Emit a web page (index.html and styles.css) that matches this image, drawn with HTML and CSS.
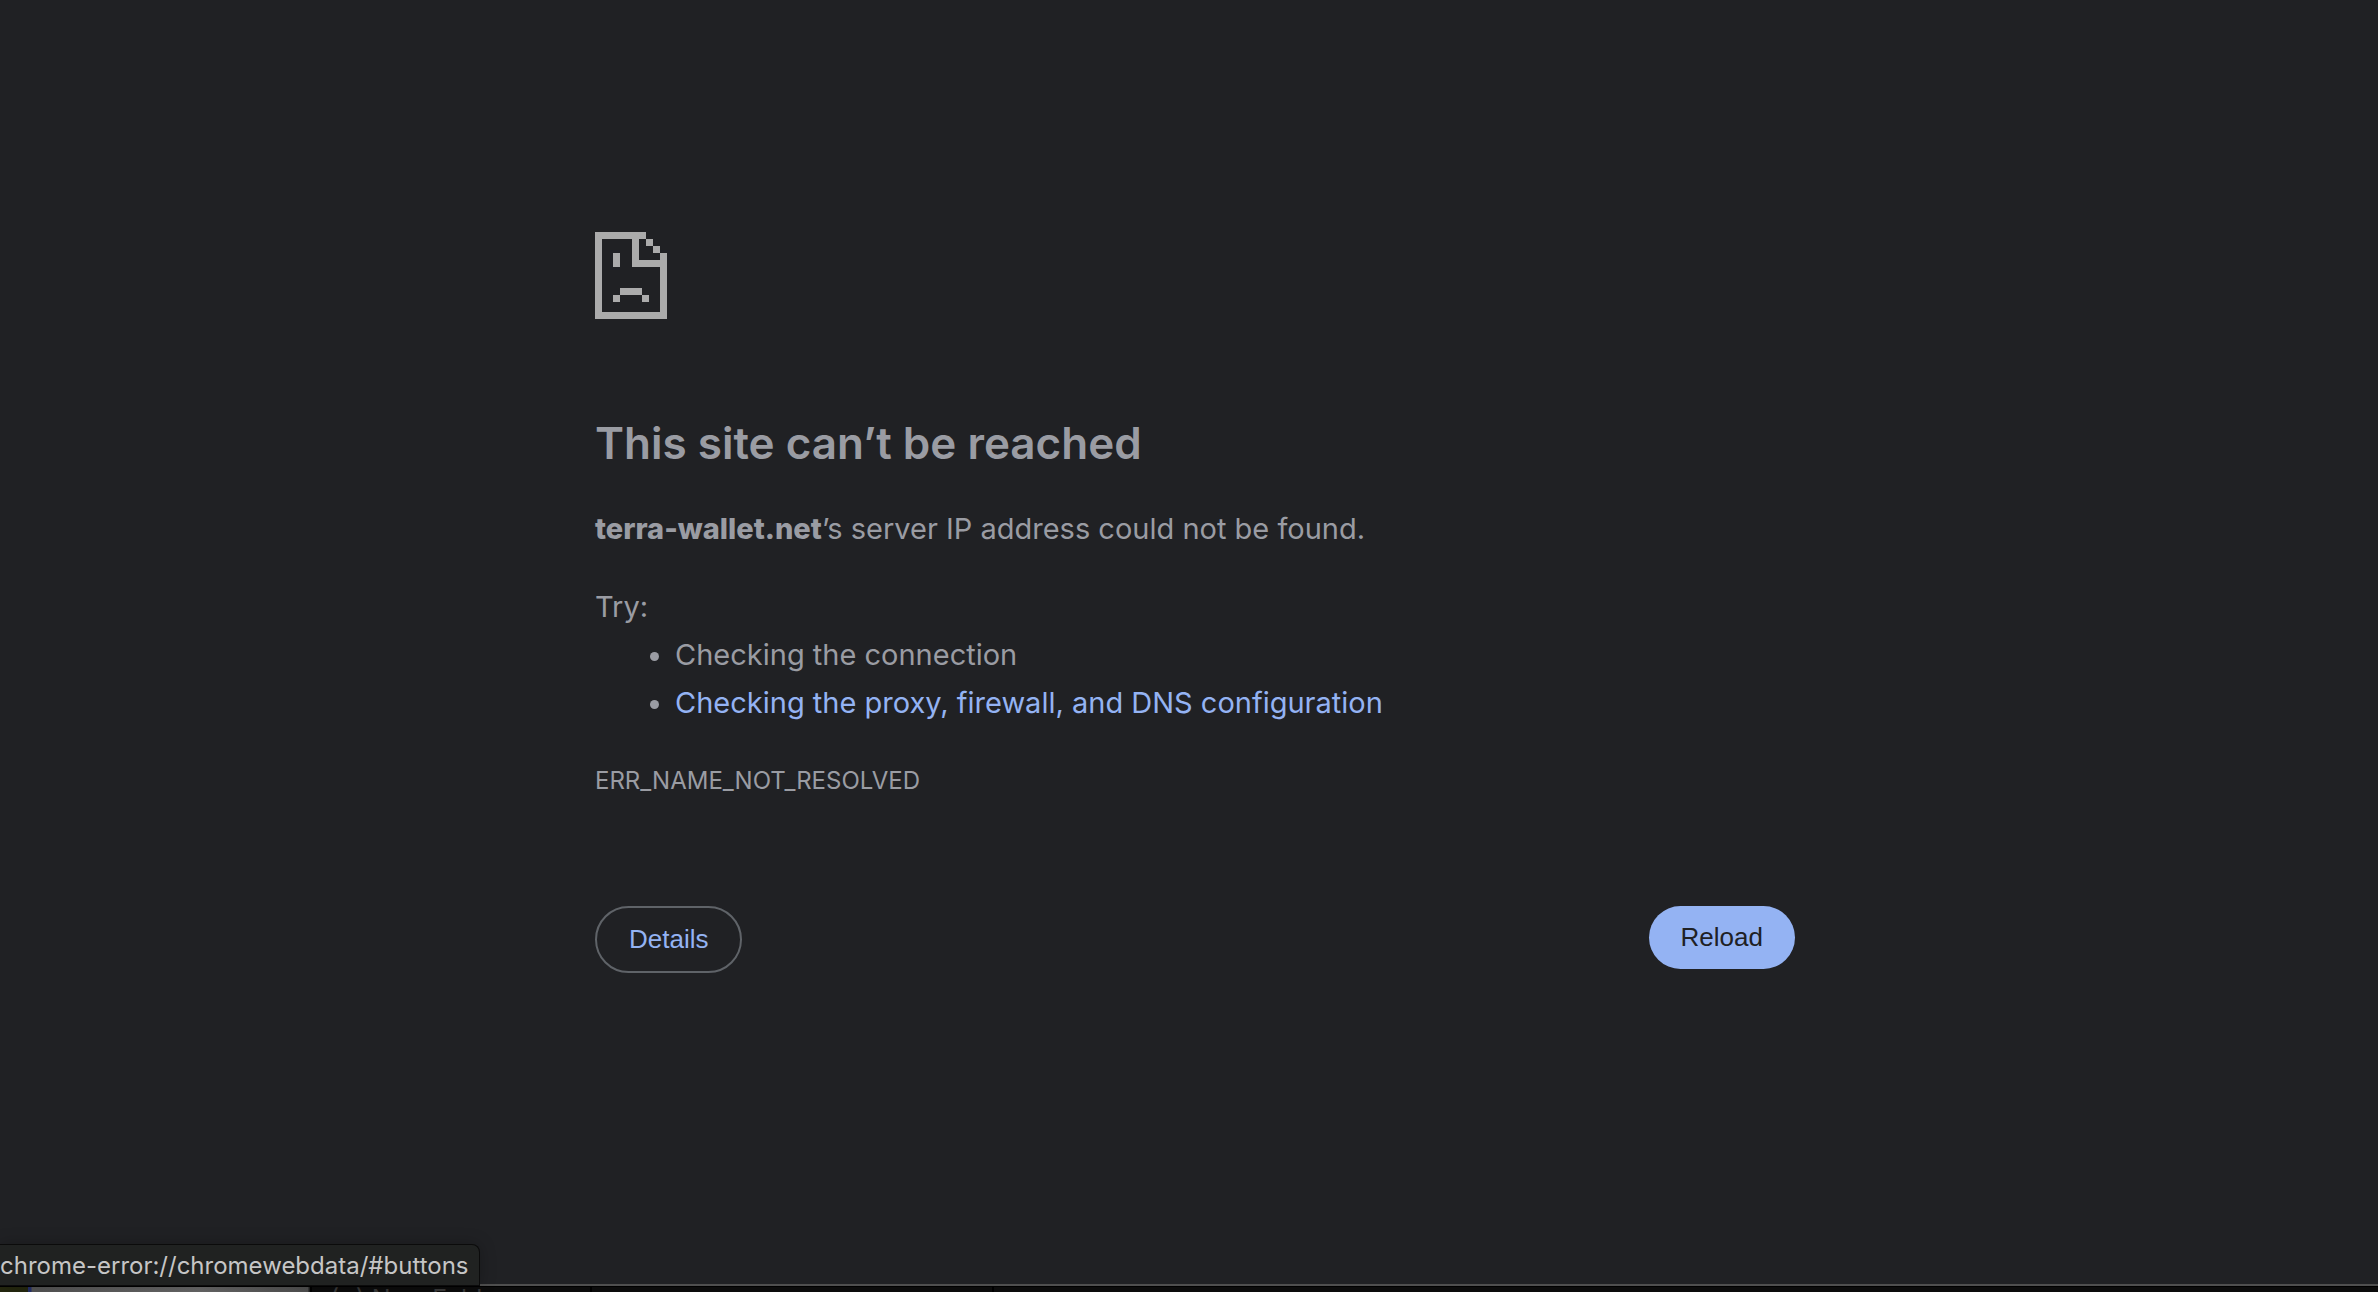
FILE: index.html
```
<!DOCTYPE html>
<html lang="en">
<head>
<meta charset="utf-8">
<title>terra-wallet.net</title>
<link rel="stylesheet" href="styles.css">
</head>
<body>
<main class="page">
  <div class="content">
    <svg class="sad-page" viewBox="0 0 72 87" shape-rendering="crispEdges" aria-hidden="true">
      <path d="M0 0H51V7H44V28H65V21H72V87H0ZM7 7V80H65V35H37V7ZM51 7H58V14H51ZM58 14H65V21H58ZM18 21H25V35H18ZM25 56H47V63H25ZM18 63H25V70H18ZM47 63H54V70H47Z" fill="#ababab" fill-rule="evenodd"/>
    </svg>
    <h1 class="title">This site can’t be reached</h1>
    <p class="summary"><strong>terra-wallet.net</strong>’s server IP address could not be found.</p>
    <div class="suggestions">
      <p class="try">Try:</p>
      <ul class="list">
        <li>Checking the connection</li>
        <li><a class="link" href="#buttons">Checking the proxy, firewall, and DNS configuration</a></li>
      </ul>
    </div>
    <p class="code">ERR_NAME_NOT_RESOLVED</p>
    <div class="buttons" id="buttons">
      <button class="button details" type="button">Details</button>
      <button class="button reload" type="button">Reload</button>
    </div>
  </div>
</main>
<footer class="dock">
  <div class="thumb"></div>
  <div class="window first"><span class="folder">(+) New Folder</span></div>
  <div class="window second"></div>
  <div class="window rest"></div>
</footer>
<div class="status">chrome-error://chromewebdata/#buttons</div>
</body>
</html>
```
FILE: styles.css
```
* {
  box-sizing: border-box;
}

body {
  position: relative;
  display: flex;
  flex-direction: column;
  min-height: 100vh;
  margin: 0;
  background: #202124;
  color: #9a9ca3;
  font-family: Inter, "Liberation Sans", sans-serif;
  font-size: 29px;
  line-height: 48px;
}

.page {
  flex: 1;
  padding: 232px 0 0 12px;
}

.content {
  max-width: 1200px;
  margin: 0 auto;
}

.sad-page {
  display: block;
  width: 72px;
  height: 87px;
}

.title {
  margin: 96px 0 34px;
  font-size: 44px;
  font-weight: 600;
  line-height: 56px;
}

.summary,
.try,
.code {
  margin: 0;
}

.summary strong {
  font-weight: 800;
}

.suggestions {
  margin-top: 30px;
}

.list {
  margin: 0;
  padding-left: 80px;
}

.link {
  color: #94b3f3;
  text-decoration: none;
}

.code {
  margin-top: 30px;
  font-size: 24px;
}

.buttons {
  display: flex;
  align-items: flex-start;
  justify-content: space-between;
  margin-top: 101px;
}

.button {
  padding: 0 32px;
  border: 0;
  border-radius: 40px;
  font-family: "Liberation Sans", Arial, sans-serif;
  font-size: 26px;
  line-height: 63px;
}

.details {
  border: 2px solid #5f6368;
  background: transparent;
  color: #94b3f3;
}

.reload {
  background: #94b3f3;
  color: #202124;
}

.dock {
  display: flex;
  gap: 2px;
  height: 8px;
  padding-top: 1px;
  overflow: hidden;
  border-top: 2px solid #4f4f4f;
  background: #000;
}

.thumb {
  width: 310px;
  background: linear-gradient(90deg, #25280f 28px, #26306b 28px, #26306b 31px, #555 32px, #686868 200px, #505050 308px, #222 309px);
}

.window {
  background: #0c0c0c;
}

.first {
  width: 278px;
  padding-left: 18px;
  overflow: hidden;
}

.folder {
  display: block;
  color: #3a3a3a;
  font-size: 25px;
  line-height: 24px;
  white-space: nowrap;
}

.second {
  width: 400px;
}

.rest {
  flex: 1;
}

.status {
  position: absolute;
  bottom: 6px;
  left: 0;
  height: 42px;
  padding-right: 10px;
  border: 1px solid #0b0b0b;
  border-left: 0;
  border-radius: 0 8px 0 0;
  background: #202221;
  box-shadow: 0 0 16px rgba(0, 0, 0, 0.25);
  color: #c6c6c6;
  font-size: 24px;
  line-height: 42px;
}
```
